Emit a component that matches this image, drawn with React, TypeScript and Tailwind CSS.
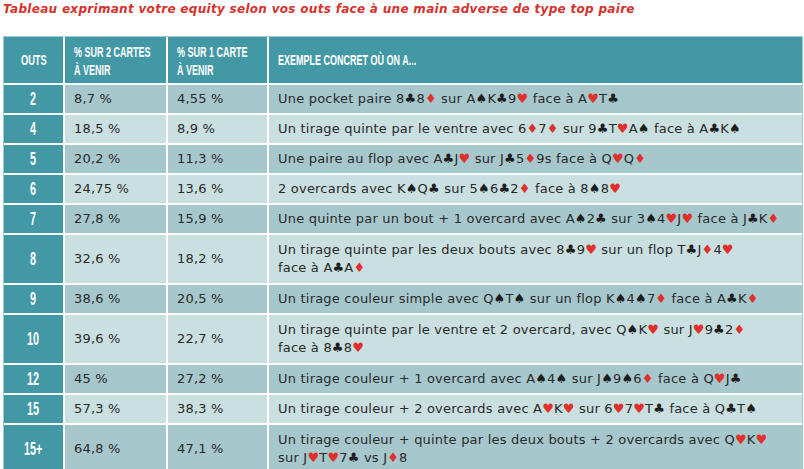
import type { ReactNode } from "react";

type Row = { outs: string; two: string; one: string; ex: string; tall?: boolean };

const rows: Row[] = [
  { outs: "2", two: "8,7 %", one: "4,55 %", ex: "Une pocket paire 8♣8♦ sur A♠K♣9♥ face à A♥T♣" },
  { outs: "4", two: "18,5 %", one: "8,9 %", ex: "Un tirage quinte par le ventre avec 6♦7♦ sur 9♣T♥A♠ face à A♣K♠" },
  { outs: "5", two: "20,2 %", one: "11,3 %", ex: "Une paire au flop avec A♣J♥ sur J♣5♦9s face à Q♥Q♦" },
  { outs: "6", two: "24,75 %", one: "13,6 %", ex: "2 overcards avec K♠Q♣ sur 5♠6♣2♦ face à 8♠8♥" },
  { outs: "7", two: "27,8 %", one: "15,9 %", ex: "Une quinte par un bout + 1 overcard avec A♠2♣ sur 3♠4♥J♥ face à J♣K♦" },
  { outs: "8", two: "32,6 %", one: "18,2 %", ex: "Un tirage quinte par les deux bouts avec 8♣9♥ sur un flop T♣J♦4♥\nface à A♣A♦", tall: true },
  { outs: "9", two: "38,6 %", one: "20,5 %", ex: "Un tirage couleur simple avec Q♠T♠ sur un flop K♠4♠7♦ face à A♣K♦" },
  { outs: "10", two: "39,6 %", one: "22,7 %", ex: "Un tirage quinte par le ventre et 2 overcard, avec Q♠K♥ sur J♥9♣2♦\nface à 8♣8♥", tall: true },
  { outs: "12", two: "45 %", one: "27,2 %", ex: "Un tirage couleur + 1 overcard avec A♠4♠ sur J♠9♠6♦ face à Q♥J♣" },
  { outs: "15", two: "57,3 %", one: "38,3 %", ex: "Un tirage couleur + 2 overcards avec A♥K♥ sur 6♥7♥T♣ face à Q♣T♠" },
  { outs: "15+", two: "64,8 %", one: "47,1 %", ex: "Un tirage couleur + quinte par les deux bouts + 2 overcards avec Q♥K♥\nsur J♥T♥7♣ vs J♦8", tall: true },
];

function Suits({ text }: { text: string }) {
  const out: ReactNode[] = [];
  text.split("\n").forEach((line, li) => {
    if (li > 0) out.push(<br key={"br" + li} />);
    Array.from(line).forEach((ch, i) => {
      if (ch === "♥" || ch === "♦") {
        out.push(<span key={li + "-" + i} className="text-[#e0302c]">{ch}</span>);
      } else if (ch === "♣" || ch === "♠") {
        out.push(<span key={li + "-" + i} className="text-[#1d1d1d]">{ch}</span>);
      } else {
        out.push(ch);
      }
    });
  });
  return <>{out}</>;
}

// condensed bold look: Liberation Sans bold squeezed horizontally
const head = "font-['Liberation_Sans',sans-serif] font-bold text-white leading-[18px] uppercase whitespace-nowrap";
const body = "font-['DejaVu_Sans',sans-serif] text-[13px] tracking-[0.2px] text-[#2a2a2a] whitespace-nowrap";

export default function App() {
  return (
    <div className="w-[804px] h-[469px] overflow-hidden bg-white">
      <p className="pl-[3px] pt-[1px] h-[36px] font-['DejaVu_Sans',sans-serif] font-bold italic text-[12px] tracking-[0.3px] leading-[17px] text-[#d6312d]">
        Tableau exprimant votre equity selon vos outs face à une main adverse de type top paire
      </p>
      <div className="ml-[3px] w-[800px] border border-[#9ccbd0] bg-white grid grid-cols-[59px_101px_99px_1fr] gap-[2px]">
        <div className={`${head} text-[15px] bg-[#4299a5] h-[46px] flex items-center justify-center`}>
          <span className="inline-block scale-x-[0.62]">Outs</span>
        </div>
        <div className={`${head} text-[15px] bg-[#4299a5] h-[46px] flex items-center px-[9px]`}>
          <span className="inline-block origin-left scale-x-[0.6] translate-y-[1px]">% sur 2 cartes<br />à venir</span>
        </div>
        <div className={`${head} text-[15px] bg-[#4299a5] h-[46px] flex items-center px-[9px]`}>
          <span className="inline-block origin-left scale-x-[0.6] translate-y-[1px]">% sur 1 carte<br />à venir</span>
        </div>
        <div className={`${head} text-[15px] bg-[#4299a5] h-[46px] flex items-center px-[9px]`}>
          <span className="inline-block origin-left scale-x-[0.6]">Exemple concret où on a...</span>
        </div>
        {rows.map((r, i) => {
          const bg = i % 2 === 0 ? "bg-[#a6c7cc]" : "bg-[#c9dfe0]";
          const h = r.tall ? "h-[48px]" : "h-[28px]";
          return (
            <div key={r.outs} className="contents">
              <div className={`${head} text-[18px] bg-[#4299a5] ${h} flex items-center justify-center`}>
                <span className="inline-block scale-x-[0.6]">{r.outs}</span>
              </div>
              <div className={`${body} ${bg} ${h} flex items-center px-[9px]`}>{r.two}</div>
              <div className={`${body} ${bg} ${h} flex items-center px-[9px]`}>{r.one}</div>
              <div className={`${body} ${bg} ${h} flex items-center px-[9px] leading-[18px]`}>
                <span>
                  <Suits text={r.ex} />
                </span>
              </div>
            </div>
          );
        })}
      </div>
    </div>
  );
}
